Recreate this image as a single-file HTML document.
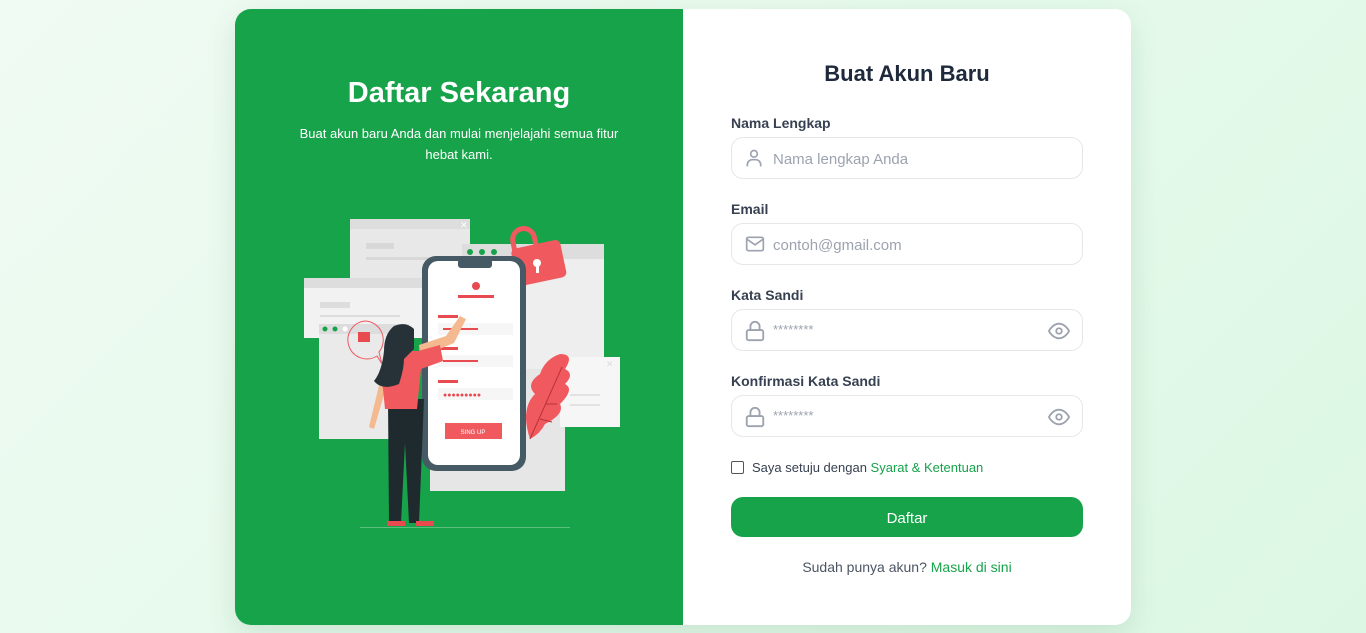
<!DOCTYPE html>
<html><head><meta charset="utf-8">
<style>
*{box-sizing:border-box;margin:0;padding:0}
body{width:1366px;height:633px;overflow:hidden;font-family:"Liberation Sans",sans-serif;background:linear-gradient(135deg,#f0fbf3,#dcf8e4);position:relative}
.card{position:absolute;left:235px;top:9px;width:896px;height:616px;border-radius:16px;overflow:hidden;background:#fff;box-shadow:0 10px 30px rgba(0,80,30,.12);display:flex}
.left{width:448px;background:#17a34a;color:#fff;position:relative}
.left h1{position:absolute;top:68px;width:100%;text-align:center;font-size:29px;font-weight:bold}
.left p{position:absolute;top:114px;left:50px;right:50px;text-align:center;font-size:13px;line-height:21px}
.right{flex:1;position:relative;color:#1f2937}
.right h2{position:absolute;top:52px;width:100%;text-align:center;font-size:22px;font-weight:bold;color:#1e293b}
.lbl{position:absolute;left:48px;font-size:14px;font-weight:bold;color:#374151}
.inp{position:absolute;left:48px;width:352px;height:42px;border:1px solid #e5e7eb;border-radius:12px;font-size:15px;color:#9ca3af;padding-left:41px;line-height:44px}
.inp svg{position:absolute;left:12px;top:10px}
.eye{left:auto!important;right:11px}
.chk{position:absolute;left:48px;top:451px;font-size:13px;color:#374151;display:flex;align-items:center}
.chk span.b{width:13px;height:13px;border:1px solid #555;border-radius:2px;margin-right:8px}
a{color:#16a34a;text-decoration:none}
.btn{position:absolute;left:48px;top:488px;width:352px;height:40px;border-radius:12px;background:#17a34a;color:#fff;text-align:center;line-height:43px;font-size:15px}
.foot{position:absolute;top:550px;width:100%;text-align:center;font-size:14px;color:#4b5563}
</style></head><body>
<div class="card">
<div class="left">
<h1>Daftar Sekarang</h1>
<p>Buat akun baru Anda dan mulai menjelajahi semua fitur hebat kami.</p>
<svg style="position:absolute;left:55px;top:200px" width="340" height="330" viewBox="290 210 340 330">
<rect x="350" y="220" width="120" height="70" fill="#e8e8e8"/><rect x="350" y="220" width="120" height="10" fill="#ddd"/>
<text x="460" y="229" font-size="9" fill="#fff">✕</text>
<rect x="366" y="244" width="28" height="6" fill="#d8d8d8"/><rect x="366" y="258" width="80" height="3" fill="#d8d8d8"/>
<rect x="304" y="279" width="130" height="60" fill="#f2f2f2"/><rect x="304" y="279" width="130" height="10" fill="#ddd"/>
<rect x="320" y="303" width="30" height="6" fill="#ddd"/><rect x="320" y="316" width="80" height="2" fill="#ddd"/>
<rect x="319" y="325" width="90" height="115" fill="#eaeaea"/><rect x="319" y="325" width="90" height="10" fill="#ddd"/>
<circle cx="325" cy="330" r="2.5" fill="#17a34a"/><circle cx="335" cy="330" r="2.5" fill="#17a34a"/><circle cx="345" cy="330" r="2.5" fill="#fff"/>
<rect x="462" y="245" width="142" height="140" fill="#eee"/><rect x="462" y="245" width="142" height="15" fill="#ddd"/>
<circle cx="470" cy="253" r="3" fill="#17a34a"/><circle cx="482" cy="253" r="3" fill="#17a34a"/><circle cx="494" cy="253" r="3" fill="#17a34a"/>
<rect x="430" y="370" width="135" height="122" fill="#e6e6e6"/>
<rect x="560" y="358" width="60" height="70" fill="#f6f6f6"/><text x="606" y="368" font-size="9" fill="#ddd">✕</text>
<rect x="570" y="395" width="30" height="2" fill="#e2e2e2"/><rect x="570" y="405" width="30" height="2" fill="#e2e2e2"/>
<path d="M517 250 v-12 a11 11 0 0 1 22 0 v10" stroke="#f05a5f" stroke-width="5" fill="none" transform="rotate(-12 538 260)"/>
<rect x="513" y="245" width="50" height="38" rx="5" fill="#f05a5f" transform="rotate(-12 538 260)"/>
<circle cx="537" cy="264" r="4" fill="#fff"/><rect x="536" y="266" width="3" height="8" fill="#fff"/>
<path d="M530 440 q-10-30 5-45 q-10-10 5-20 q5-15 20-20 q15 0 5 15 q10 5 0 15 q10 5 -5 20 q5 10 -15 20 q-5 10 -15 15z" fill="#f05a5f"/>
<path d="M530 440 L562 368 M545 405 l12 0 M540 420 l12 3" stroke="#b83238" stroke-width="1" fill="none"/>
<rect x="422" y="257" width="104" height="215" rx="14" fill="#455a64"/>
<rect x="428" y="262" width="92" height="204" rx="10" fill="#fff"/>
<rect x="458" y="260" width="34" height="9" rx="3" fill="#455a64"/>
<circle cx="476" cy="287" r="4" fill="#e84a50"/><rect x="458" y="296" width="36" height="3" fill="#e84a50"/>
<rect x="438" y="316" width="20" height="3" fill="#e84a50"/><rect x="438" y="324" width="75" height="12" fill="#f6f6f6"/><rect x="443" y="329" width="35" height="2" fill="#e84a50"/>
<rect x="438" y="348" width="20" height="3" fill="#e84a50"/><rect x="438" y="356" width="75" height="12" fill="#f6f6f6"/><rect x="443" y="361" width="35" height="2" fill="#e84a50"/>
<rect x="438" y="381" width="20" height="3" fill="#e84a50"/><rect x="438" y="389" width="75" height="12" fill="#f6f6f6"/><text x="443" y="398" font-size="7" fill="#e84a50">●●●●●●●●●</text>
<rect x="445" y="424" width="57" height="16" fill="#f05a5f"/><text x="473" y="435" font-size="6" fill="#fff" text-anchor="middle">SING UP</text>
<path d="M365 322 a19 19 0 1 0 12 35 l5 8 l-3 -12 a19 19 0 0 0 -14 -31z" fill="none" stroke="#f05a5f" stroke-width="1"/><rect x="358" y="333" width="12" height="10" fill="#e84a50"/>
<!-- person -->
<path d="M419 346 l27 -9 l14 -20 l6 3 l-12 24 l-34 14z" fill="#f4b98f"/>
<path d="M381 378 l-12 50 l5 2 l14 -48z" fill="#f4b98f"/>
<path d="M388 400 h36 l-5 124 h-10 l-4 -80 l-4 80 h-12z" fill="#1f2a2e"/>
<path d="M380 376 l10 -24 h28 l22 -6 l3 16 l-22 8 l-4 40 h-32 l-2 -20z" fill="#f05a5f"/>
<path d="M414 330 q-8 -8 -20 -3 q-10 8 -10 25 q-2 20 -10 30 q8 10 25 3 q5 -15 5 -25 l10 -10z" fill="#263238"/>
<rect x="387" y="522" width="18" height="5" fill="#e84a50"/><rect x="416" y="522" width="18" height="5" fill="#e84a50"/>
<rect x="360" y="528" width="210" height="1" fill="#5cbf7e"/>
</svg>
</div>
<div class="right">
<h2>Buat Akun Baru</h2>
<div class="lbl" style="top:106px">Nama Lengkap</div>
<div class="inp" style="top:128px"><svg width="20" height="20" viewBox="0 0 24 24" fill="none" stroke="#9ca3af" stroke-width="2"><circle cx="12" cy="7" r="4"/><path d="M4 22v-2a6 6 0 0 1 6-6h4a6 6 0 0 1 6 6v2"/></svg>Nama lengkap Anda</div>
<div class="lbl" style="top:192px">Email</div>
<div class="inp" style="top:214px"><svg width="22" height="20" viewBox="0 0 24 24" fill="none" stroke="#9ca3af" stroke-width="2"><rect x="2" y="4" width="20" height="16" rx="2"/><path d="M2 6l10 7 10-7"/></svg>contoh@gmail.com</div>
<div class="lbl" style="top:278px">Kata Sandi</div>
<div class="inp" style="top:300px;font-size:13px;line-height:40px"><svg width="22" height="22" viewBox="0 0 24 24" fill="none" stroke="#9ca3af" stroke-width="2"><rect x="3" y="11" width="18" height="11" rx="2"/><path d="M7 11V7a5 5 0 0 1 10 0v4"/></svg>********<svg class="eye" width="24" height="22" viewBox="0 0 24 24" fill="none" stroke="#9ca3af" stroke-width="2"><path d="M1 12s4-8 11-8 11 8 11 8-4 8-11 8-11-8-11-8z"/><circle cx="12" cy="12" r="3"/></svg></div>
<div class="lbl" style="top:364px">Konfirmasi Kata Sandi</div>
<div class="inp" style="top:386px;font-size:13px;line-height:40px"><svg width="22" height="22" viewBox="0 0 24 24" fill="none" stroke="#9ca3af" stroke-width="2"><rect x="3" y="11" width="18" height="11" rx="2"/><path d="M7 11V7a5 5 0 0 1 10 0v4"/></svg>********<svg class="eye" width="24" height="22" viewBox="0 0 24 24" fill="none" stroke="#9ca3af" stroke-width="2"><path d="M1 12s4-8 11-8 11 8 11 8-4 8-11 8-11-8-11-8z"/><circle cx="12" cy="12" r="3"/></svg></div>
<div class="chk"><span class="b"></span>Saya setuju dengan&nbsp;<a>Syarat &amp; Ketentuan</a></div>
<div class="btn">Daftar</div>
<div class="foot">Sudah punya akun? <a>Masuk di sini</a></div>
</div>
</div>
</body></html>
